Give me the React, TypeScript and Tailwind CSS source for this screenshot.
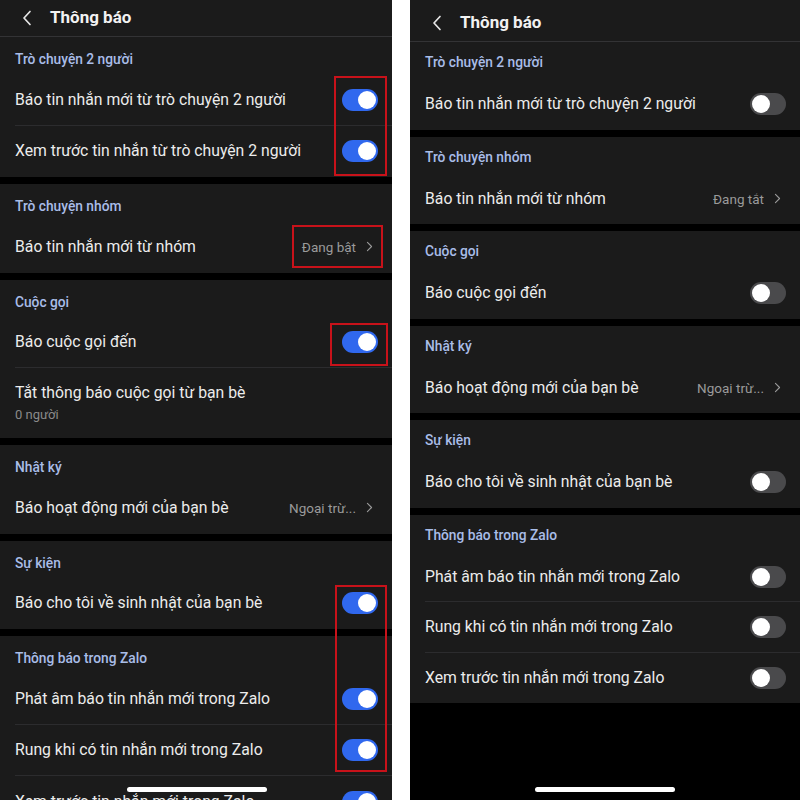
type Row =
  | { kind: "toggle"; label: string; on: boolean }
  | { kind: "value"; label: string; value: string }
  | { kind: "sub"; label: string; sub: string };

type Section = { title: string; rows: Row[] };

const leftSections: Section[] = [
  {
    title: "Trò chuyện 2 người",
    rows: [
      { kind: "toggle", label: "Báo tin nhắn mới từ trò chuyện 2 người", on: true },
      { kind: "toggle", label: "Xem trước tin nhắn từ trò chuyện 2 người", on: true },
    ],
  },
  {
    title: "Trò chuyện nhóm",
    rows: [{ kind: "value", label: "Báo tin nhắn mới từ nhóm", value: "Đang bật" }],
  },
  {
    title: "Cuộc gọi",
    rows: [
      { kind: "toggle", label: "Báo cuộc gọi đến", on: true },
      { kind: "sub", label: "Tắt thông báo cuộc gọi từ bạn bè", sub: "0 người" },
    ],
  },
  {
    title: "Nhật ký",
    rows: [{ kind: "value", label: "Báo hoạt động mới của bạn bè", value: "Ngoại trừ..." }],
  },
  {
    title: "Sự kiện",
    rows: [{ kind: "toggle", label: "Báo cho tôi về sinh nhật của bạn bè", on: true }],
  },
  {
    title: "Thông báo trong Zalo",
    rows: [
      { kind: "toggle", label: "Phát âm báo tin nhắn mới trong Zalo", on: true },
      { kind: "toggle", label: "Rung khi có tin nhắn mới trong Zalo", on: true },
      { kind: "toggle", label: "Xem trước tin nhắn mới trong Zalo", on: true },
    ],
  },
];

const rightSections: Section[] = [
  {
    title: "Trò chuyện 2 người",
    rows: [{ kind: "toggle", label: "Báo tin nhắn mới từ trò chuyện 2 người", on: false }],
  },
  {
    title: "Trò chuyện nhóm",
    rows: [{ kind: "value", label: "Báo tin nhắn mới từ nhóm", value: "Đang tắt" }],
  },
  {
    title: "Cuộc gọi",
    rows: [{ kind: "toggle", label: "Báo cuộc gọi đến", on: false }],
  },
  {
    title: "Nhật ký",
    rows: [{ kind: "value", label: "Báo hoạt động mới của bạn bè", value: "Ngoại trừ..." }],
  },
  {
    title: "Sự kiện",
    rows: [{ kind: "toggle", label: "Báo cho tôi về sinh nhật của bạn bè", on: false }],
  },
  {
    title: "Thông báo trong Zalo",
    rows: [
      { kind: "toggle", label: "Phát âm báo tin nhắn mới trong Zalo", on: false },
      { kind: "toggle", label: "Rung khi có tin nhắn mới trong Zalo", on: false },
      { kind: "toggle", label: "Xem trước tin nhắn mới trong Zalo", on: false },
    ],
  },
];

function Toggle({ on }: { on: boolean }) {
  return (
    <div
      className={
        on
          ? "w-[36px] h-[22px] rounded-full bg-[#3068ee] flex items-center justify-end px-[2px]"
          : "w-[36px] h-[22px] rounded-full bg-[#4a4a4c] flex items-center justify-start px-[2px]"
      }
    >
      <div className="w-[18px] h-[18px] rounded-full bg-white" />
    </div>
  );
}

function Chevron({ className }: { className: string }) {
  return (
    <svg className={className} viewBox="0 0 10 16" fill="none" stroke="currentColor" strokeWidth="1.6" strokeLinecap="round" strokeLinejoin="round">
      <path d="M2 2l6 6-6 6" />
    </svg>
  );
}

function SettingRow({ row, tall, last }: { row: Row; tall: boolean; last: boolean }) {
  const h = row.kind === "sub" ? "h-[70px]" : tall ? "h-[51.5px]" : "h-[50.5px]";
  return (
    <div className={`${h} relative flex items-center pl-[15px] pr-[14px]`}>
      {row.kind === "sub" ? (
        <div className="flex flex-col gap-[4px]">
          <span className="text-[15.75px] leading-[20px] text-[#ececec]">{row.label}</span>
          <span className="text-[13px] leading-[16px] text-[#8a8a8a]">{row.sub}</span>
        </div>
      ) : (
        <span className="flex-1 text-[15.75px] leading-[20px] text-[#ececec] whitespace-nowrap">{row.label}</span>
      )}
      {row.kind === "toggle" && <Toggle on={row.on} />}
      {row.kind === "value" && (
        <div className="flex items-center gap-[10px] text-[#9a9a9a]">
          <span className="text-[13.5px]">{row.value}</span>
          <Chevron className="w-[7px] h-[11px] mr-[5px]" />
        </div>
      )}
      {!last && <div className="absolute left-[15px] right-0 bottom-0 h-px bg-[#2c2c2e]" />}
    </div>
  );
}

function Panel({ sections, tall }: { sections: Section[]; tall: boolean }) {
  return (
    <div className="flex flex-col gap-[7px]">
      {sections.map((s, i) => (
        <div key={i} className="bg-[#1b1b1b]">
          <div
            className={
              tall
                ? "h-[37px] pl-[15px] pt-[13px] text-[13.75px] leading-[18px] font-medium text-[#a9bde8]"
                : "h-[37px] pl-[15px] pt-[11px] text-[13.75px] leading-[18px] font-medium text-[#a9bde8]"
            }
          >
            {s.title}
          </div>
          {s.rows.map((r, j) => (
            <SettingRow key={j} row={r} tall={tall} last={j === s.rows.length - 1} />
          ))}
        </div>
      ))}
    </div>
  );
}

function Header({ tall }: { tall: boolean }) {
  return (
    <div
      className={
        tall
          ? "h-[37px] bg-[#1b1b1b] border-b border-[#333335] flex items-center pl-[22px] gap-[18px]"
          : "h-[42px] bg-[#1b1b1b] border-b border-[#333335] flex items-center pl-[22px] pt-[4px] gap-[18px]"
      }
    >
      <svg className="w-[10px] h-[16px] text-[#e6e6e6]" viewBox="0 0 10 16" fill="none" stroke="currentColor" strokeWidth="1.7" strokeLinecap="round" strokeLinejoin="round">
        <path d="M8 1.5L2 8l6 6.5" />
      </svg>
      <span className="text-[17px] font-bold text-[#f2f2f2]">Thông báo</span>
    </div>
  );
}

function RedBox({ className }: { className: string }) {
  return <div className={`absolute border-2 border-[#c8121a] ${className}`} />;
}

export default function App() {
  return (
    <div className="w-[800px] h-[800px] bg-white flex overflow-hidden" style={{ fontFamily: "Roboto, 'Noto Sans', sans-serif" }}>
      <div className="relative w-[392px] h-[800px] bg-black overflow-hidden">
        <Header tall={true} />
        <Panel sections={leftSections} tall={true} />
        <RedBox className="left-[334px] top-[76px] w-[53px] h-[100px]" />
        <RedBox className="left-[292px] top-[225px] w-[91px] h-[43px]" />
        <RedBox className="left-[330px] top-[323px] w-[58px] h-[43px]" />
        <RedBox className="left-[335px] top-[585px] w-[52px] h-[187px]" />
        <div className="absolute left-[127px] top-[787px] w-[140px] h-[5px] rounded-full bg-white" />
      </div>
      <div className="w-[18px]" />
      <div className="relative w-[390px] h-[800px] bg-black overflow-hidden">
        <Header tall={false} />
        <Panel sections={rightSections} tall={false} />
        <div className="absolute left-[125px] top-[787px] w-[140px] h-[5px] rounded-full bg-white" />
      </div>
    </div>
  );
}
